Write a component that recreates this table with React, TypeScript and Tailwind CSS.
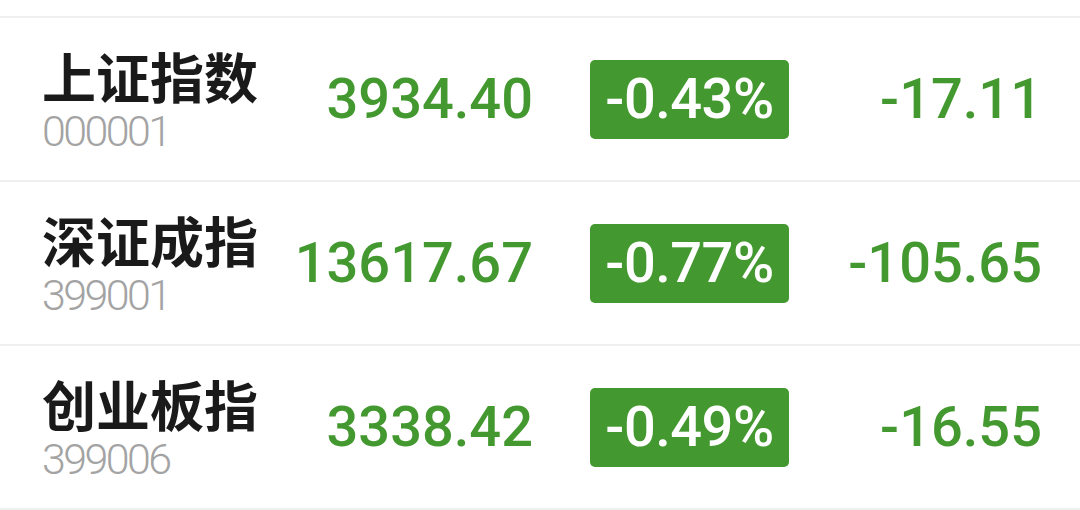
import React from "react";

interface IndexRow {
  name: string;
  code: string;
  price: string;
  pct: string;
  change: string;
}

const rows: IndexRow[] = [
  { name: "上证指数", code: "000001", price: "3934.40", pct: "-0.43%", change: "-17.11" },
  { name: "深证成指", code: "399001", price: "13617.67", pct: "-0.77%", change: "-105.65" },
  { name: "创业板指", code: "399006", price: "3338.42", pct: "-0.49%", change: "-16.55" },
];

const numFont = "font-['Roboto','DejaVu_Sans',sans-serif]";

const Row: React.FC<{ row: IndexRow }> = ({ row }) => (
  <div className="flex h-[164px] items-center border-t-2 border-[#f0f0f0] pl-[42px] pr-[38px]">
    {/* name + code */}
    <div className="flex w-[251px] flex-col">
      <span className="font-['Noto_Sans_CJK_SC',sans-serif] text-[54px] font-bold leading-[58px] text-[#1a1a1a]">
        {row.name}
      </span>
      <span className={`${numFont} mt-[6px] text-[43px] font-light leading-[40px] tracking-[-2.6px] text-[#a3a3a3]`}>
        {row.code}
      </span>
    </div>
    <div className={`${numFont} w-[240px] text-right text-[56px] font-medium leading-none text-[#43992f]`}>
      {row.price}
    </div>
    <div className="ml-[57px] flex h-[79px] w-[199px] items-center justify-center rounded-[5px] bg-[#43982f]">
      <span className={`${numFont} text-[56px] font-medium leading-none tracking-[-0.5px] text-white`}>{row.pct}</span>
    </div>
    <div className={`${numFont} flex-1 text-right text-[56px] font-medium leading-none text-[#43992f]`}>
      {row.change}
    </div>
  </div>
);

export default function App() {
  return (
    <div className="h-[510px] w-[1080px] overflow-hidden bg-white pt-[16px]">
      <div className="border-b-2 border-[#f0f0f0]">
        {rows.map((r) => (
          <Row key={r.code} row={r} />
        ))}
      </div>
    </div>
  );
}
